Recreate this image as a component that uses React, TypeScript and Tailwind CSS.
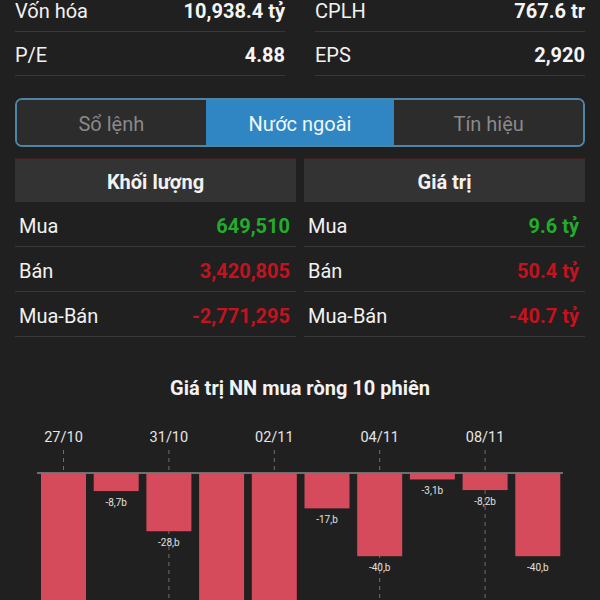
import React from "react";

const font = { fontFamily: "Roboto, 'Noto Sans', sans-serif" };

const vals = [-80, -8.7, -28, -80, -80, -17, -40, -3.1, -8.2, -40];
const labels = ["", "-8,7b", "-28,b", "", "", "-17,b", "-40,b", "-3,1b", "-8,2b", "-40,b"];
const dates: [number, string][] = [
  [0, "27/10"],
  [2, "31/10"],
  [4, "02/11"],
  [6, "04/11"],
  [8, "08/11"],
];

function Chart() {
  const base = 53;
  const scale = 2.08;
  const x0 = 41;
  const step = 52.7;
  const w = 45;
  return (
    <svg width={600} height={180} className="block">
      {dates.map(([i, d]) => {
        const cx = x0 + i * step + w / 2;
        return (
          <g key={d}>
            <line x1={cx} x2={cx} y1={30} y2={180} stroke="#6e6e6e" strokeWidth={1} strokeDasharray="4 4" />
            <text x={cx} y={22} fill="#e6e6e6" fontSize={14.5} textAnchor="middle" style={font}>
              {d}
            </text>
          </g>
        );
      })}
      <line x1={37} x2={563} y1={base} y2={base} stroke="#8a8a8a" strokeWidth={1.5} />
      {vals.map((v, i) => {
        const h = Math.abs(v) * scale;
        const x = x0 + i * step;
        return (
          <g key={i}>
            <rect x={x} y={base} width={w} height={h} fill="#d64b5b" />
            {labels[i] && (
              <text x={x + w / 2} y={base + h + 15} fill="#e0e0e0" fontSize={10} textAnchor="middle" style={font}>
                {labels[i]}
              </text>
            )}
          </g>
        );
      })}
    </svg>
  );
}

function InfoRow({ label, value }: { label: string; value: string }) {
  return (
    <div className="h-[44px] flex items-center justify-between border-b border-[#383838] pt-[3px]">
      <span className="text-[20px] text-[#f2f2f2]">{label}</span>
      <span className="text-[20px] font-bold text-[#f5f5f5]">{value}</span>
    </div>
  );
}

function TableCol({
  title,
  rows,
}: {
  title: string;
  rows: { label: string; value: string; color: string }[];
}) {
  return (
    <div className="flex flex-col">
      <div className="h-[44px] bg-[#333333] flex items-center justify-center border-t border-[#3a1e20] pt-[2px]">
        <span className="text-[20px] font-bold text-[#f2f2f2]">{title}</span>
      </div>
      {rows.map((r) => (
        <div
          key={r.label}
          className="h-[45px] flex items-center justify-between border-b border-[#383838] pl-[4px] pr-[6px] pt-[4px]"
        >
          <span className="text-[20px] text-[#f2f2f2]">{r.label}</span>
          <span className="text-[20px] font-bold" style={{ color: r.color }}>
            {r.value}
          </span>
        </div>
      ))}
    </div>
  );
}

export default function App() {
  const green = "#22ac2c";
  const red = "#c4121f";
  return (
    <div className="w-[600px] h-[600px] overflow-hidden bg-[#202020]" style={font}>
      <div className="grid grid-cols-2 gap-x-[30px] px-[15px] -mt-[12px]">
        <div className="flex flex-col">
          <InfoRow label="Vốn hóa" value="10,938.4 tỷ" />
          <InfoRow label="P/E" value="4.88" />
        </div>
        <div className="flex flex-col">
          <InfoRow label="CPLH" value="767.6 tr" />
          <InfoRow label="EPS" value="2,920" />
        </div>
      </div>

      <div className="mx-[15px] mt-[22px] h-[49px] rounded-[7px] border-2 border-[#4e85a6] overflow-hidden grid grid-cols-3">
        <div className="flex items-center justify-center bg-[#2c2c2c] text-[20px] text-[#8a8a8a] pt-[2px]">Sổ lệnh</div>
        <div className="flex items-center justify-center bg-[#2f86c3] text-[20px] text-[#f2f7fb] pt-[2px]">Nước ngoài</div>
        <div className="flex items-center justify-center bg-[#2c2c2c] text-[20px] text-[#8a8a8a] pt-[2px]">Tín hiệu</div>
      </div>

      <div className="grid grid-cols-2 gap-x-[8px] px-[15px] mt-[11px]">
        <TableCol
          title="Khối lượng"
          rows={[
            { label: "Mua", value: "649,510", color: green },
            { label: "Bán", value: "3,420,805", color: red },
            { label: "Mua-Bán", value: "-2,771,295", color: red },
          ]}
        />
        <TableCol
          title="Giá trị"
          rows={[
            { label: "Mua", value: "9.6 tỷ", color: green },
            { label: "Bán", value: "50.4 tỷ", color: red },
            { label: "Mua-Bán", value: "-40.7 tỷ", color: red },
          ]}
        />
      </div>

      <div className="mt-[39px] text-center text-[20px] font-bold text-[#f2f2f2] leading-[24px]">
        Giá trị NN mua ròng 10 phiên
      </div>

      <div className="mt-[20px]">
        <Chart />
      </div>
    </div>
  );
}
